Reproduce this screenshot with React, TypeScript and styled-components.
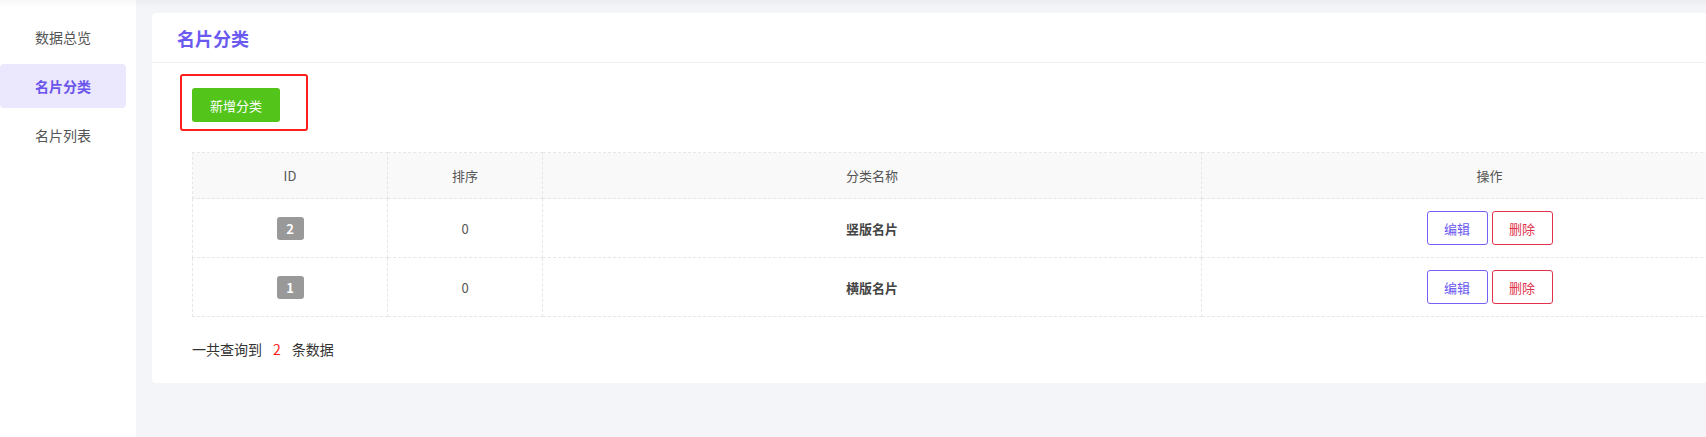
import React from "react";
import styled, { createGlobalStyle } from "styled-components";

interface Category {
  id: number;
  sort: number;
  name: string;
}

const categories: Category[] = [
  { id: 2, sort: 0, name: "竖版名片" },
  { id: 1, sort: 0, name: "横版名片" },
];

const menu = ["数据总览", "名片分类", "名片列表"];

export default function App() {
  return (
    <>
      <GlobalStyle />
      <Layout>
        <Sidebar>
          {menu.map((item) => (
            <MenuItem key={item} active={item === "名片分类"}>
              {item}
            </MenuItem>
          ))}
        </Sidebar>
        <Main>
          <Card>
            <CardHeader>名片分类</CardHeader>
            <CardBody>
              <Toolbar>
                <AddButton>新增分类</AddButton>
              </Toolbar>
              <Table>
                <colgroup>
                  <col style={{ width: 195 }} />
                  <col style={{ width: 155 }} />
                  <col style={{ width: 659 }} />
                  <col style={{ width: 576 }} />
                </colgroup>
                <thead>
                  <tr>
                    <Th>ID</Th>
                    <Th>排序</Th>
                    <Th>分类名称</Th>
                    <Th>操作</Th>
                  </tr>
                </thead>
                <tbody>
                  {categories.map((c) => (
                    <tr key={c.id}>
                      <Td>
                        <IdBadge>{c.id}</IdBadge>
                      </Td>
                      <Td>{c.sort}</Td>
                      <Td>
                        <Name>{c.name}</Name>
                      </Td>
                      <Td>
                        <Actions>
                          <ActionButton tone="edit">编辑</ActionButton>
                          <ActionButton tone="delete">删除</ActionButton>
                        </Actions>
                      </Td>
                    </tr>
                  ))}
                </tbody>
              </Table>
              <Summary>
                一共查询到<Count>{categories.length}</Count>条数据
              </Summary>
            </CardBody>
          </Card>
        </Main>
      </Layout>
    </>
  );
}

// styled component
const GlobalStyle = createGlobalStyle`
  html, body {
    margin: 0;
    padding: 0;
    overflow: hidden;
    background: #f4f5f9;
  }
  body {
    font-family: "Noto Sans CJK SC", "Noto Sans", sans-serif;
    color: #333;
  }
`;

const Layout = styled.div`
  display: flex;
  width: 1833px;
  min-height: 437px;
  background: #f4f5f9;
  box-shadow: inset 0 7px 7px -5px rgba(0, 0, 0, 0.05);
`;

const Sidebar = styled.div`
  width: 136px;
  flex-shrink: 0;
  background: #fff;
  padding-top: 15px;
  display: flex;
  flex-direction: column;
  gap: 5px;
  box-shadow: inset 0 7px 7px -5px rgba(0, 0, 0, 0.05);
`;

const MenuItem = styled.div<{ active?: boolean }>`
  width: 126px;
  height: 44px;
  box-sizing: border-box;
  padding-left: 35px;
  display: flex;
  align-items: center;
  font-size: 14px;
  border-radius: 4px;
  color: ${(p) => (p.active ? "#6a55ea" : "#555")};
  font-weight: ${(p) => (p.active ? 600 : 400)};
  background: ${(p) => (p.active ? "#ebe7fd" : "transparent")};
`;

const Main = styled.div`
  flex: 1;
  padding: 13px 16px;
`;

const Card = styled.div`
  background: #fff;
  border-radius: 4px;
`;

const CardHeader = styled.div`
  height: 50px;
  box-sizing: border-box;
  padding: 0 25px;
  display: flex;
  align-items: center;
  font-size: 18px;
  font-weight: 700;
  color: #6a5af0;
  border-bottom: 1px solid #f0f0f0;
`;

const CardBody = styled.div`
  padding: 11px 40px 24px;
`;

const Toolbar = styled.div`
  display: inline-flex;
  margin-left: -12px;
  padding: 12px 26px 7px 10px;
  border: 2px solid #ff1f1f;
  border-radius: 3px;
`;

const AddButton = styled.button`
  width: 88px;
  height: 34px;
  border: none;
  border-radius: 3px;
  background: #52c41a;
  color: #fff;
  font-family: inherit;
  font-size: 13px;
`;

const Table = styled.table`
  margin-top: 21px;
  width: 1585px;
  border-collapse: collapse;
  table-layout: fixed;
  font-size: 13px;
`;

const Th = styled.th`
  height: 45px;
  padding: 0;
  font-weight: 400;
  color: #555;
  background: #f9f9f9;
  border: 1px dashed #e6e6e6;
  text-align: center;
`;

const Td = styled.td`
  height: 58px;
  padding: 0;
  color: #555;
  border: 1px dashed #e6e6e6;
  text-align: center;
`;

const IdBadge = styled.span`
  display: inline-flex;
  align-items: center;
  justify-content: center;
  width: 27px;
  height: 23px;
  border-radius: 3px;
  background: #999;
  color: #fff;
  font-weight: 700;
  font-size: 13px;
  vertical-align: middle;
`;

const Name = styled.span`
  font-weight: 700;
  color: #444;
`;

const Actions = styled.div`
  display: flex;
  justify-content: center;
  gap: 4px;
`;

const ActionButton = styled.button<{ tone: "edit" | "delete" }>`
  width: 61px;
  height: 34px;
  background: #fff;
  border-radius: 3px;
  font-family: inherit;
  font-size: 13px;
  border: 1px solid ${(p) => (p.tone === "edit" ? "#7360f5" : "#e0334b")};
  color: ${(p) => (p.tone === "edit" ? "#6a58f0" : "#e0334b")};
`;

const Summary = styled.div`
  margin-top: 22px;
  font-size: 14px;
  line-height: 20px;
  color: #333;
`;

const Count = styled.span`
  color: #ff1a1a;
  margin: 0 11px;
`;
